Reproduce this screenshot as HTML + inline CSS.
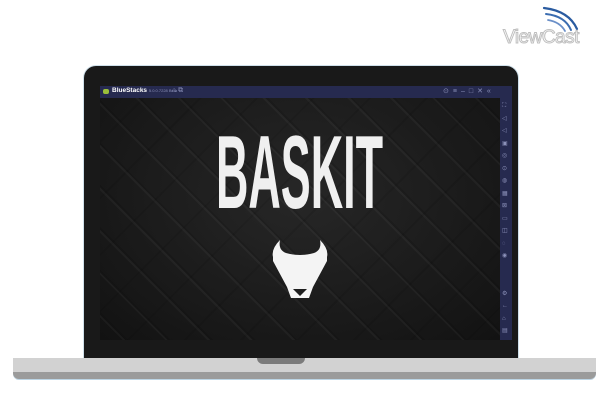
<!DOCTYPE html>
<html><head><style>
body{margin:0;width:602px;height:414px;background:#fff;position:relative;overflow:hidden;font-family:"Liberation Sans",sans-serif}
.lid{position:absolute;left:84px;top:66px;width:434px;height:294px;background:#191919;border-radius:12px 12px 0 0;box-shadow:0 0 0 1px #cfe0ea}
.screen{position:absolute;left:100px;top:86px;width:412px;height:254px;background:#222;overflow:hidden}
.tb{position:absolute;left:0;top:0;width:412px;height:12px;background:#262a4f}
.side{position:absolute;right:0;top:12px;width:12px;height:242px;background:#262a4f}
.game{position:absolute;left:0;top:12px;width:400px;height:242px;background:
repeating-linear-gradient(45deg,rgba(255,255,255,0) 0 16px,rgba(255,255,255,.035) 16px 18px,rgba(0,0,0,.12) 18px 20px,rgba(255,255,255,0) 20px 30px),
repeating-linear-gradient(-45deg,rgba(255,255,255,0) 0 22px,rgba(0,0,0,.1) 22px 24px,rgba(255,255,255,0) 24px 40px),
radial-gradient(ellipse at 50% 40%,#272727,#121212);}
.ic{position:absolute;color:#8b90b8;font-size:7px}
.base{position:absolute;left:13px;top:358px;width:583px;height:21px;background:#d2d2d2;border-radius:0 0 6px 6px;box-shadow:0 1px 0 #bcd4e4}
.base2{position:absolute;left:13px;top:372px;width:583px;height:7px;background:#9b9b9b;border-radius:0 0 6px 6px}
.notch{position:absolute;left:257px;top:358px;width:48px;height:6px;background:#7b7b7b;border-radius:0 0 6px 6px}
</style></head><body>
<div style="position:absolute;left:541px;top:5px;width:40px;height:28px">
<svg width="40" height="28"><g fill="none" stroke-linecap="round"><path d="M3 3 Q28 6 36 24" stroke="#2a5ba0" stroke-width="2.2"/><path d="M5 9 Q24 11 30 25" stroke="#3a6cb0" stroke-width="2"/><path d="M7 15 Q19 17 24 26" stroke="#6a8fc8" stroke-width="1.8"/></g></svg></div>
<div style="position:absolute;left:503px;top:27px;font-size:19px;color:#fff;-webkit-text-stroke:1px #bfbfbf;letter-spacing:-0.5px">ViewCast</div>
<div class="lid"></div>
<div class="screen">
<div class="game">
<svg style="position:absolute;left:0;top:0" width="400" height="242">
<text x="116" y="110" font-family="Liberation Sans Narrow, Liberation Sans, sans-serif" font-weight="bold" font-size="104" fill="#f0f0f0" textLength="167" lengthAdjust="spacingAndGlyphs">BASKIT</text>
<path transform="translate(171,142)" fill="#f4f4f4" fill-rule="evenodd" d="M9 0 Q0 9 2 17 L2 21 L16 47 L20 58 L38 58 L42 47 L56 21 L56 17 Q58 9 49 0 Q51 10 43 13 Q36 15 29 15 Q22 15 15 13 Q7 10 9 0 Z M22 49 L36 49 L29 56 Z"/>
</svg>
</div>
<div class="tb">
<div style="position:absolute;left:3px;top:3px;width:6px;height:5px;background:#9bbf3a;border-radius:2px"></div>
<div style="position:absolute;left:12px;top:1px;font-size:6.5px;font-weight:bold;color:#fff;white-space:nowrap">BlueStacks <span style="font-weight:normal;font-size:4px;color:#8b90b8">5.0.0.7228 Beta</span></div>
<div class="ic" style="left:72px;top:1px">⌂ ⧉</div>
<div class="ic" style="left:343px;top:1px;letter-spacing:4px">⊙≡–□✕«</div>
</div>
<div class="side">
<div class="ic" style="left:2px;top:2px;line-height:12.5px;font-size:6px">⛶<br>◁<br>◁<br>▣<br>◎<br>⊙<br>◍<br>▦<br>⊠<br>▭<br>◫<br>◌<br>◉<br><br><br>⚙<br>←<br>⌂<br>▤</div>
</div>
</div>
<div class="base"></div>
<div class="base2"></div>
<div class="notch"></div>
</body></html>
